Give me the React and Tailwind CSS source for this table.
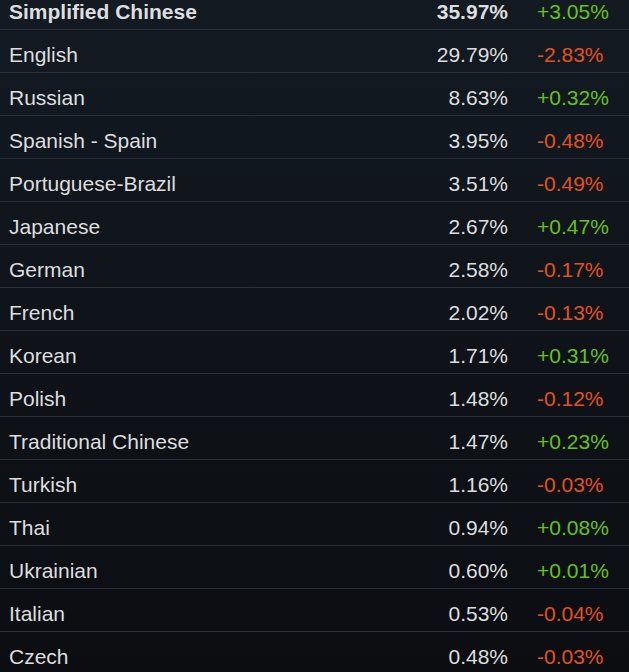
const rows = [
  ['Simplified Chinese', '35.97%', '+3.05%'],
  ['English', '29.79%', '-2.83%'],
  ['Russian', '8.63%', '+0.32%'],
  ['Spanish - Spain', '3.95%', '-0.48%'],
  ['Portuguese-Brazil', '3.51%', '-0.49%'],
  ['Japanese', '2.67%', '+0.47%'],
  ['German', '2.58%', '-0.17%'],
  ['French', '2.02%', '-0.13%'],
  ['Korean', '1.71%', '+0.31%'],
  ['Polish', '1.48%', '-0.12%'],
  ['Traditional Chinese', '1.47%', '+0.23%'],
  ['Turkish', '1.16%', '-0.03%'],
  ['Thai', '0.94%', '+0.08%'],
  ['Ukrainian', '0.60%', '+0.01%'],
  ['Italian', '0.53%', '-0.04%'],
  ['Czech', '0.48%', '-0.03%'],
];

export default function App() {
  return (
    <div className="h-[672px] w-[629px] overflow-hidden bg-gradient-to-b from-[#131a22] to-[#0b0d11] font-['Liberation_Sans',Arial,sans-serif] text-[21px] leading-[24px] text-[#dcdedf]">
      <div className="-mt-[13px]">
        {rows.map(([name, pct, change], i) => (
          <div
            key={name}
            className={`flex border-b border-[#2a3039] pt-[13px] pb-[5px] ${i === 0 ? 'font-bold' : ''}`}
          >
            <div className="flex-1 pl-[9px]">{name}</div>
            <div className="mr-[29px] text-right">{pct}</div>
            <div
              className={`w-[92px] font-normal ${change.startsWith('+') ? 'text-[#66c11c]' : 'text-[#e2521f]'}`}
            >
              {change}
            </div>
          </div>
        ))}
      </div>
    </div>
  );
}
